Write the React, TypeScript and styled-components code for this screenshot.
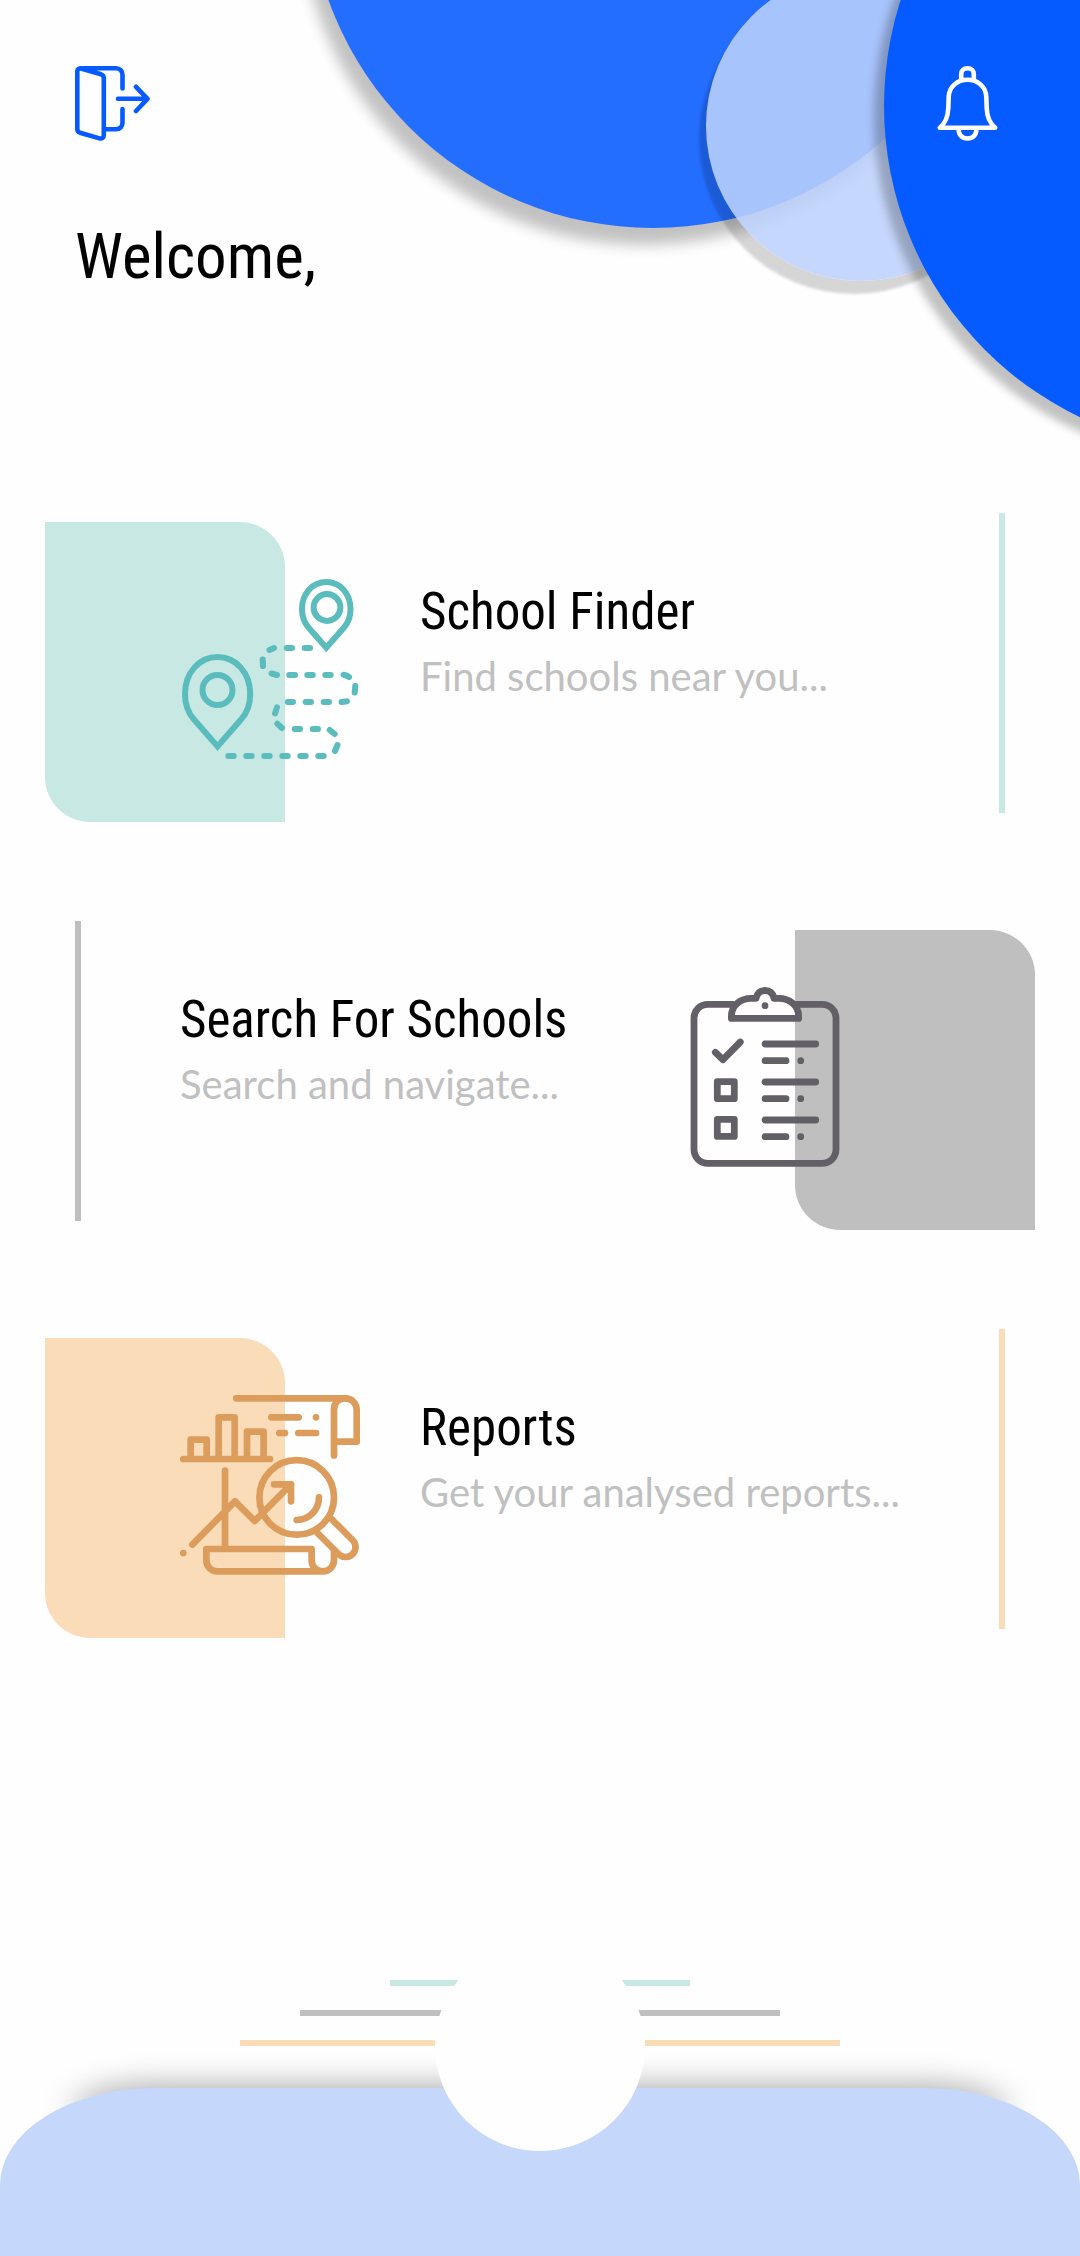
import React from "react";
import styled, { createGlobalStyle } from "styled-components";

const GlobalStyle = createGlobalStyle`
  * { box-sizing: border-box; }
  body {
    margin: 0;
    background: #fefefe;
    color: #000;
    font-family: "Roboto Condensed", "Liberation Sans Narrow", Roboto, sans-serif;
  }
`;

const Page = styled.div`
  position: relative;
  display: flex;
  flex-direction: column;
  min-height: 100vh;
  overflow: hidden;
`;

const Bubble = styled.span<{
  $size: number;
  $top: number;
  $right: number;
  $color: string;
  $shadow: string;
}>`
  position: absolute;
  top: ${(p) => p.$top}px;
  right: ${(p) => p.$right}px;
  width: ${(p) => p.$size}px;
  height: ${(p) => p.$size}px;
  border-radius: 50%;
  background: ${(p) => p.$color};
  box-shadow: ${(p) => p.$shadow};
`;

const Header = styled.header`
  position: relative;
  padding: 66px 75px 0;
`;

const Toolbar = styled.div`
  display: flex;
  justify-content: space-between;
`;

const IconButton = styled.button<{ $color: string }>`
  display: block;
  width: 75px;
  height: 75px;
  padding: 0;
  border: 0;
  background: none;
  color: ${(p) => p.$color};
  cursor: pointer;
`;

const Greeting = styled.h1`
  margin: 75px 0 0;
  font-size: 63px;
  line-height: 82px;
  font-weight: 400;
`;

const Menu = styled.main`
  position: relative;
  display: grid;
  gap: 99px;
  padding: 215px 45px 0;
`;

const Card = styled.a<{ $mirrored?: boolean }>`
  display: grid;
  grid-template-columns: ${(p) =>
    p.$mirrored
      ? "[line] 30px 6px 99px [text] 1fr [icon] 120px [panel] 60px [icon-end] 180px [end]"
      : "[panel] 135px [icon] 105px [panel-end] 75px [icon-end] 60px [text] 1fr [line] 6px 30px [end]"};
  height: 309px;
  color: inherit;
  text-decoration: none;
`;

const Panel = styled.span<{ $color: string; $mirrored?: boolean }>`
  grid-row: 1;
  grid-column: panel / ${(p) => (p.$mirrored ? "end" : "panel-end")};
  align-self: end;
  height: 300px;
  border-radius: 0 45px 0 45px;
  background: ${(p) => p.$color};
`;

const CardIcon = styled.span<{ $color: string }>`
  grid-row: 1;
  grid-column: icon / icon-end;
  justify-self: center;
  width: 180px;
  height: 180px;
  margin-top: 66px;
  color: ${(p) => p.$color};
`;

const CardText = styled.span`
  grid-row: 1;
  grid-column: text;
  display: flex;
  flex-direction: column;
  padding-top: 67px;
  white-space: nowrap;
`;

const CardTitle = styled.span`
  font-size: 51px;
  line-height: 64px;
`;

const CardHint = styled.span`
  font-family: Lato, sans-serif;
  font-size: 40px;
  line-height: 64px;
  color: #c0c0c0;
`;

const Line = styled.span<{ $color: string; $mirrored?: boolean }>`
  grid-row: 1;
  grid-column: ${(p) => (p.$mirrored ? "2" : "line")};
  width: 6px;
  height: 300px;
  background: ${(p) => p.$color};
`;

const Footer = styled.footer`
  position: relative;
  margin-top: auto;
`;

const Stripes = styled.div`
  display: flex;
  flex-direction: column;
  align-items: center;
  gap: 24px;
  padding-bottom: 42px;
`;

const Stripe = styled.span<{ $color: string; $width: number }>`
  width: ${(p) => p.$width}px;
  height: 6px;
  background: ${(p) => p.$color};
`;

const Base = styled.div`
  height: 168px;
  border-radius: 155px 155px 0 0 / 97px 97px 0 0;
  background: #c5d8fb;
  box-shadow: 0 -72px 30px -70px rgba(0, 0, 0, 0.36);
`;

const Notch = styled.span`
  position: absolute;
  top: -39px;
  left: 50%;
  width: 210px;
  height: 210px;
  margin-left: -105px;
  border-radius: 50%;
  background: #fefefe;
`;

const Svg = styled.svg`
  display: block;
  width: 100%;
  height: 100%;
  fill: none;
  stroke: currentColor;
  stroke-linecap: round;
  stroke-linejoin: round;
`;

const LogoutIcon = () => (
  <Svg viewBox="0 0 75 75" strokeWidth="4.600" aria-hidden="true">
    <path d="M47.500 22.500V9C47.500 5 45 2.300 41 2.300H5.500C3.500 2.300 2.300 3.500 2.300 5.500V63C2.300 65 3 66 5 66.700L24.500 72.400C27 73 28.800 71.800 28.800 69V12C28.800 10 28 9 26 8.300L6 2.500" />
    <path d="M31 63.200H41C45 63.200 47.500 60.500 47.500 56.500V43" />
    <path d="M43 32.800H72.500M61 20.800L72.500 32.800L61 45" />
  </Svg>
);

const BellIcon = () => (
  <Svg viewBox="0 0 75 75" strokeWidth="4.600" aria-hidden="true">
    <path d="M31.200 14V8C31.200 4.500 33.500 2.300 37.500 2.300S43.800 4.500 43.800 8V14" />
    <path d="M9.800 61.700H65.200C60 57.500 57 50 56.700 42C56.500 38 56.500 36 56.300 31C56 21 48 13.800 37.500 13.800S19 21 18.700 31C18.500 36 18.500 38 18.300 42C18 50 15 57.500 9.800 61.700Z" />
    <path d="M28.600 63C28.600 69 32 72.500 37.500 72.500S46.400 69 46.400 63" />
  </Svg>
);

const RouteIcon = () => (
  <Svg viewBox="0 0 180 180" strokeWidth="6" aria-hidden="true">
    <g strokeLinejoin="miter">
      <path d="M37.500 167.400L14 140.500C8.300 134 5 124 5 115C5 94 19 78 37.500 78S70.200 94 70.200 115C70.200 124 67 134 61 140.500Z" />
      <path d="M146.300 68.700L128.500 48.500C124.500 44 122 37 122 30C122 14.500 132.500 3 146.300 3S170.500 14.500 170.500 30C170.500 37 168 44 164 48.500Z" />
    </g>
    <circle cx="37.500" cy="111" r="15" />
    <circle cx="147" cy="28.500" r="13.400" />
    <path d="M130 69H124.700M112 69H106.700M94 69L89.500 71M82.700 80.500L83 87M91.500 94.500L97 96M109.300 96H115M127.300 96H132.700M145.300 96H150.700M163.500 95.700Q167 96.300 169 98M175.300 107L174.700 113.500M167 122.300L161.500 123M149 123H143.700M131 123H125.700M113 123H107.700M97 128.300L95 134.500M97.300 144.700L102 149M114.700 150H120M132.700 150H138M149.700 151L154.700 155M157.500 166L155 172M143.700 177H138.300M125.700 177H120.300M107.700 177H102.300M89.700 177H84.300M71.700 177H66.300M53.700 177H48.300" />
  </Svg>
);

const ChecklistIcon = () => (
  <Svg viewBox="0 0 180 180" strokeWidth="6.800" aria-hidden="true">
    <path d="M58 17.300H33C25 17.300 19 23.300 19 31.300V162.300C19 170.300 25 176.400 33 176.400H147C155 176.400 161 170.300 161 162.300V31.300C161 23.300 155 17.300 147 17.300H122" />
    <path d="M56.400 31.400V29C56.400 18 66 11.300 76 11.300H81C82 6.500 85 3.500 90 3.500S98 6.500 99 11.300H104C114 11.300 123.600 18 123.600 29V31.400Z" />
    <path d="M40.300 65.300L48 72.700L65.300 55M42.300 94.700H59.300V111.700H42.300ZM42.300 132.400H59.300V149.400H42.300Z" />
    <path d="M90 57H140.700M90 95H140.700M90 133H140.700M90 73.700H111M90 111.700H111M90 149.700H111M125.700 73.700h.01M125.700 111.700h.01M125.700 149.700h.01M90 18.700h.01" />
  </Svg>
);

const ReportIcon = () => (
  <Svg viewBox="0 0 180 180" strokeWidth="6.700" aria-hidden="true">
    <path d="M56.300 3.300H165C172 3.300 176.700 8.500 176.700 15V46.600H155M154 60.500V14.500C154 8 158.500 3.300 165 3.300" />
    <path d="M91.300 22.300H118.700M136 22.300h.01M99.300 38H105M118.300 38H136" />
    <path d="M3.300 64H90M10.700 64V44.700H26.700V64M38.700 64V22.300H54.700V64M67 64V36.700H83.600V64" />
    <path d="M45 75.700V153M3.300 158h.01M12.300 149.700L55 106.300L74.700 126L111 89.300M94 89.300H111V106.300" />
    <circle cx="116.700" cy="102.400" r="37.300" />
    <path d="M139 102.300C139 115 129 125 116.700 125" />
    <path d="M151 123.500L173.500 146A10 10 0 0 1 159.500 160L137 137.500" />
    <path d="M154 155V165C154 171.500 149 176.400 143 176.400H37.500C31 176.400 26.300 171.500 26.300 165V154H131.600V165C131.600 171.500 136.500 176.400 143 176.400" />
  </Svg>
);

const items = [
  {
    title: "School Finder",
    hint: "Find schools near you...",
    tint: "#c8e8e4",
    ink: "#5abcbc",
    Icon: RouteIcon,
    mirrored: false,
  },
  {
    title: "Search For Schools",
    hint: "Search and navigate...",
    tint: "#bfbfbf",
    ink: "#626066",
    Icon: ChecklistIcon,
    mirrored: true,
  },
  {
    title: "Reports",
    hint: "Get your analysed reports...",
    tint: "#fadcb9",
    ink: "#dc9c5b",
    Icon: ReportIcon,
    mirrored: false,
  },
];

export default function App() {
  return (
    <>
      <GlobalStyle />
      <Page>
        <Bubble $size={690} $top={-462} $right={82} $color="#236dff" $shadow="-9px 17px 14px rgba(0, 0, 0, 0.24)" />
        <Bubble $size={310} $top={-29} $right={64} $color="rgba(188, 209, 251, 0.87)" $shadow="-7px 13px 3px rgba(0, 0, 0, 0.16)" />
        <Bubble $size={690} $top={-239} $right={-494} $color="#055bff" $shadow="-10px 10px 8px rgba(0, 0, 0, 0.24)" />
        <Header>
          <Toolbar>
            <IconButton type="button" $color="#055bff" aria-label="Log out">
              <LogoutIcon />
            </IconButton>
            <IconButton type="button" $color="#fff" aria-label="Notifications">
              <BellIcon />
            </IconButton>
          </Toolbar>
          <Greeting>Welcome,</Greeting>
        </Header>
        <Menu>
          {items.map(({ title, hint, tint, ink, Icon, mirrored }) => (
            <Card key={title} href="#" $mirrored={mirrored}>
              <Panel $color={tint} $mirrored={mirrored} />
              <CardIcon $color={ink}>
                <Icon />
              </CardIcon>
              <CardText>
                <CardTitle>{title}</CardTitle>
                <CardHint>{hint}</CardHint>
              </CardText>
              <Line $color={tint} $mirrored={mirrored} />
            </Card>
          ))}
        </Menu>
        <Footer>
          <Stripes>
            <Stripe $color="#c8e8e4" $width={300} />
            <Stripe $color="#bfbfbf" $width={480} />
            <Stripe $color="#fadcb9" $width={600} />
          </Stripes>
          <Base />
          <Notch />
        </Footer>
      </Page>
    </>
  );
}
